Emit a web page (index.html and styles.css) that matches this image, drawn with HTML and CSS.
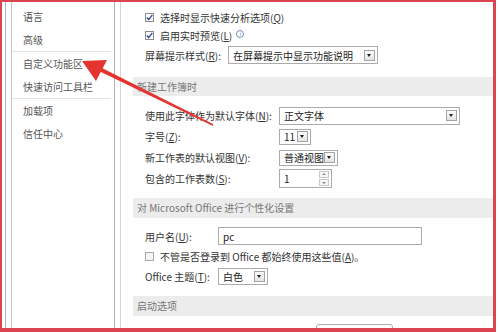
FILE: index.html
```html
<!DOCTYPE html>
<html lang="zh-CN">
<head>
<meta charset="utf-8">
<link rel="stylesheet" href="styles.css">
</head>
<body>
<div class="window">
  <nav class="nav">
    <div class="nav-line">
      <div class="nav-inner">
        <div class="nav-item">语言</div>
        <div class="nav-item">高级</div>
        <div class="sep"></div>
        <div class="nav-item">自定义功能区</div>
        <div class="nav-item">快速访问工具栏</div>
        <div class="sep"></div>
        <div class="nav-item">加载项</div>
        <div class="nav-item">信任中心</div>
      </div>
    </div>
  </nav>
  <main class="content">
    <div class="row check-row">
      <span class="cb"><svg width="9" height="9" viewBox="0 0 9 9"><path d="M1.8 4.6 L3.7 6.6 L7.3 1.9" fill="none" stroke="#2f4f9e" stroke-width="1.4"/></svg></span>
      <span>选择时显示快速分析选项(<u>Q</u>)</span>
    </div>
    <div class="row check-row">
      <span class="cb"><svg width="9" height="9" viewBox="0 0 9 9"><path d="M1.8 4.6 L3.7 6.6 L7.3 1.9" fill="none" stroke="#2f4f9e" stroke-width="1.4"/></svg></span>
      <span>启用实时预览(<u>L</u>)</span>
      <span class="info">i</span>
    </div>
    <div class="row field-row tall">
      <span class="label w-top">屏幕提示样式(<u>R</u>):</span>
      <span class="select w-tip"><span class="val">在屏幕提示中显示功能说明</span><span class="dd"></span></span>
    </div>

    <div class="band first">新建工作簿时</div>
    <div class="group g1">
      <div class="row field-row">
        <span class="label w-s1">使用此字体作为默认字体(<u>N</u>):</span>
        <span class="select w-font"><span class="val">正文字体</span><span class="dd"></span></span>
      </div>
      <div class="row field-row">
        <span class="label w-s1">字号(<u>Z</u>):</span>
        <span class="select w-size short"><span class="val">11</span><span class="dd"></span></span>
      </div>
      <div class="row field-row">
        <span class="label w-s1">新工作表的默认视图(<u>V</u>):</span>
        <span class="select w-view short"><span class="val">普通视图</span><span class="dd"></span></span>
      </div>
      <div class="row field-row">
        <span class="label w-s1">包含的工作表数(<u>S</u>):</span>
        <span class="select w-spin spin"><span class="val">1</span><span class="spinbtns"><span class="sb up"></span><span class="sb down"></span></span></span>
      </div>
    </div>

    <div class="band">对 Microsoft Office 进行个性化设置</div>
    <div class="group g2">
      <div class="row field-row">
        <span class="label w-s2">用户名(<u>U</u>):</span>
        <span class="select w-user"><span class="val">pc</span></span>
      </div>
      <div class="row check-row">
        <span class="cb off"></span>
        <span>不管是否登录到 Office 都始终使用这些值(<u>A</u>)。</span>
      </div>
      <div class="row field-row">
        <span class="label w-s2">Office 主题(<u>T</u>):</span>
        <span class="select w-theme"><span class="val">白色</span><span class="dd"></span></span>
      </div>
    </div>

    <div class="band">启动选项</div>
    <div class="partial-btn"></div>
  </main>
</div>

<svg class="arrow" width="499" height="332" viewBox="0 0 499 332">
  <polygon points="82,61 107,60 96,81" fill="#e5332f"/>
  <polygon points="98,66 101,72 213,126 213,124" fill="#e5332f"/>
</svg>
<div class="frame"></div>
</body>
</html>
```

FILE: styles.css
```css
* { box-sizing: border-box; }

html, body {
  margin: 0;
  padding: 0;
  background: #ffffff;
}

body {
  width: 499px;
  height: 332px;
  overflow: hidden;
  position: relative;
  font-family: "Noto Sans CJK SC", "Noto Sans", sans-serif;
  font-size: 10px;
  color: #333333;
}

u { text-decoration: underline; text-underline-offset: 1px; }

.window {
  display: flex;
  width: 496px;
  height: 332px;
  overflow: hidden;
}

/* ---------- left navigation ---------- */
.nav {
  width: 120px;
  flex: none;
  padding-left: 5px;
  display: flex;
}

.nav-line {
  border-left: 1px solid #a9b6c8;
  padding-left: 5px;
  display: flex;
  flex: 1;
}

.nav-inner {
  flex: none;
  width: 104px;
  border-left: 1px solid #c6c6c6;
  border-right: 1px solid #b4b4b4;
  padding-top: 5px;
}

.nav-item {
  height: 23px;
  line-height: 23px;
  padding-left: 11px;
  color: #555555;
  white-space: nowrap;
}

.sep {
  height: 1px;
  background: #e3e3e3;
  margin: 0 3px 0 0;
}

/* ---------- content ---------- */
.content {
  flex: 1;
  border-left: 1px solid #d4d4d4;
  padding-top: 8px;
  display: flex;
  flex-direction: column;
  min-width: 0;
}

.content > * { flex: none; }

.row {
  display: flex;
  align-items: center;
  padding-left: 24px;
  white-space: nowrap;
}

.check-row { height: 18px; }

.field-row { height: 21px; }

.field-row.tall { height: 20px; margin-top: 1px; }

.cb {
  width: 9px;
  height: 9px;
  border: 1px solid #8d8d8d;
  background: #ffffff;
  margin-right: 6px;
  flex: none;
  display: flex;
}

.cb svg { margin: -1px; }

.cb.off {
  border-color: #a8a8a8;
  background: #f4f4f4;
}

.info {
  width: 8px;
  height: 8px;
  border: 1px solid #6f8fc4;
  border-radius: 50%;
  color: #6f8fc4;
  font-size: 6px;
  line-height: 6px;
  text-align: center;
  margin-left: 4px;
  margin-top: -2px;
  font-family: "DejaVu Sans", sans-serif;
}

.label { flex: none; }
.w-top { width: 83px; }
.w-s1 { width: 134px; }
.w-s2 { width: 73px; }

.select {
  height: 18px;
  border: 1px solid #ababab;
  background: #ffffff;
  display: flex;
  align-items: center;
  justify-content: space-between;
  padding-left: 4px;
  flex: none;
  color: #222222;
}

.select.short { height: 16px; }

.w-tip { width: 150px; }
.w-font { width: 181px; }
.w-size { width: 32px; }
.w-view { width: 59px; }
.w-spin { width: 53px; height: 19px; }
.w-user { width: 204px; }
.w-theme { width: 50px; height: 17px; }

.dd {
  width: 11px;
  height: 11px;
  margin-right: 2px;
  border: 1px solid #a3a3a3;
  background: linear-gradient(#fbfbfb, #e4e4e4);
  position: relative;
  flex: none;
}

.dd::after {
  content: "";
  position: absolute;
  left: 2px;
  top: 3px;
  border-left: 2.5px solid transparent;
  border-right: 2.5px solid transparent;
  border-top: 3px solid #1e1e1e;
}

.spinbtns {
  display: flex;
  flex-direction: column;
  gap: 1px;
  margin-right: 2px;
}

.sb {
  width: 10px;
  height: 7px;
  border: 1px solid #c8c8c8;
  background: #f6f6f6;
  position: relative;
}

.sb.up::after, .sb.down::after {
  content: "";
  position: absolute;
  left: 2px;
  border-left: 2px solid transparent;
  border-right: 2px solid transparent;
}

.sb.up::after { top: 1px; border-bottom: 2px solid #8a8a8a; }
.sb.down::after { top: 2px; border-top: 2px solid #8a8a8a; }

.band {
  margin-left: 12px;
  height: 20px;
  line-height: 20px;
  background: #ececec;
  padding-left: 4px;
  color: #777777;
  white-space: nowrap;
}

.band.first { margin-top: 12px; height: 19px; line-height: 19px; }

.g1 { padding-top: 9px; }
.g1 + .band { margin-top: 9px; }

.g2 { padding-top: 8px; }
.g2 .field-row, .g2 .check-row { height: 20px; }
.g2 + .band { margin-top: 10px; }

.partial-btn {
  margin-top: 8px;
  margin-left: 195px;
  width: 77px;
  height: 20px;
  border: 1px solid #adadad;
  border-radius: 3px;
  background: #fdfdfd;
}

/* ---------- annotations ---------- */
.arrow {
  position: absolute;
  left: 0;
  top: 0;
  pointer-events: none;
}

.frame {
  position: absolute;
  left: 0;
  top: 0;
  width: 496px;
  height: 332px;
  border-style: solid;
  border-color: #dc4550;
  border-width: 2px 3px 4px 2px;
  pointer-events: none;
}
```
